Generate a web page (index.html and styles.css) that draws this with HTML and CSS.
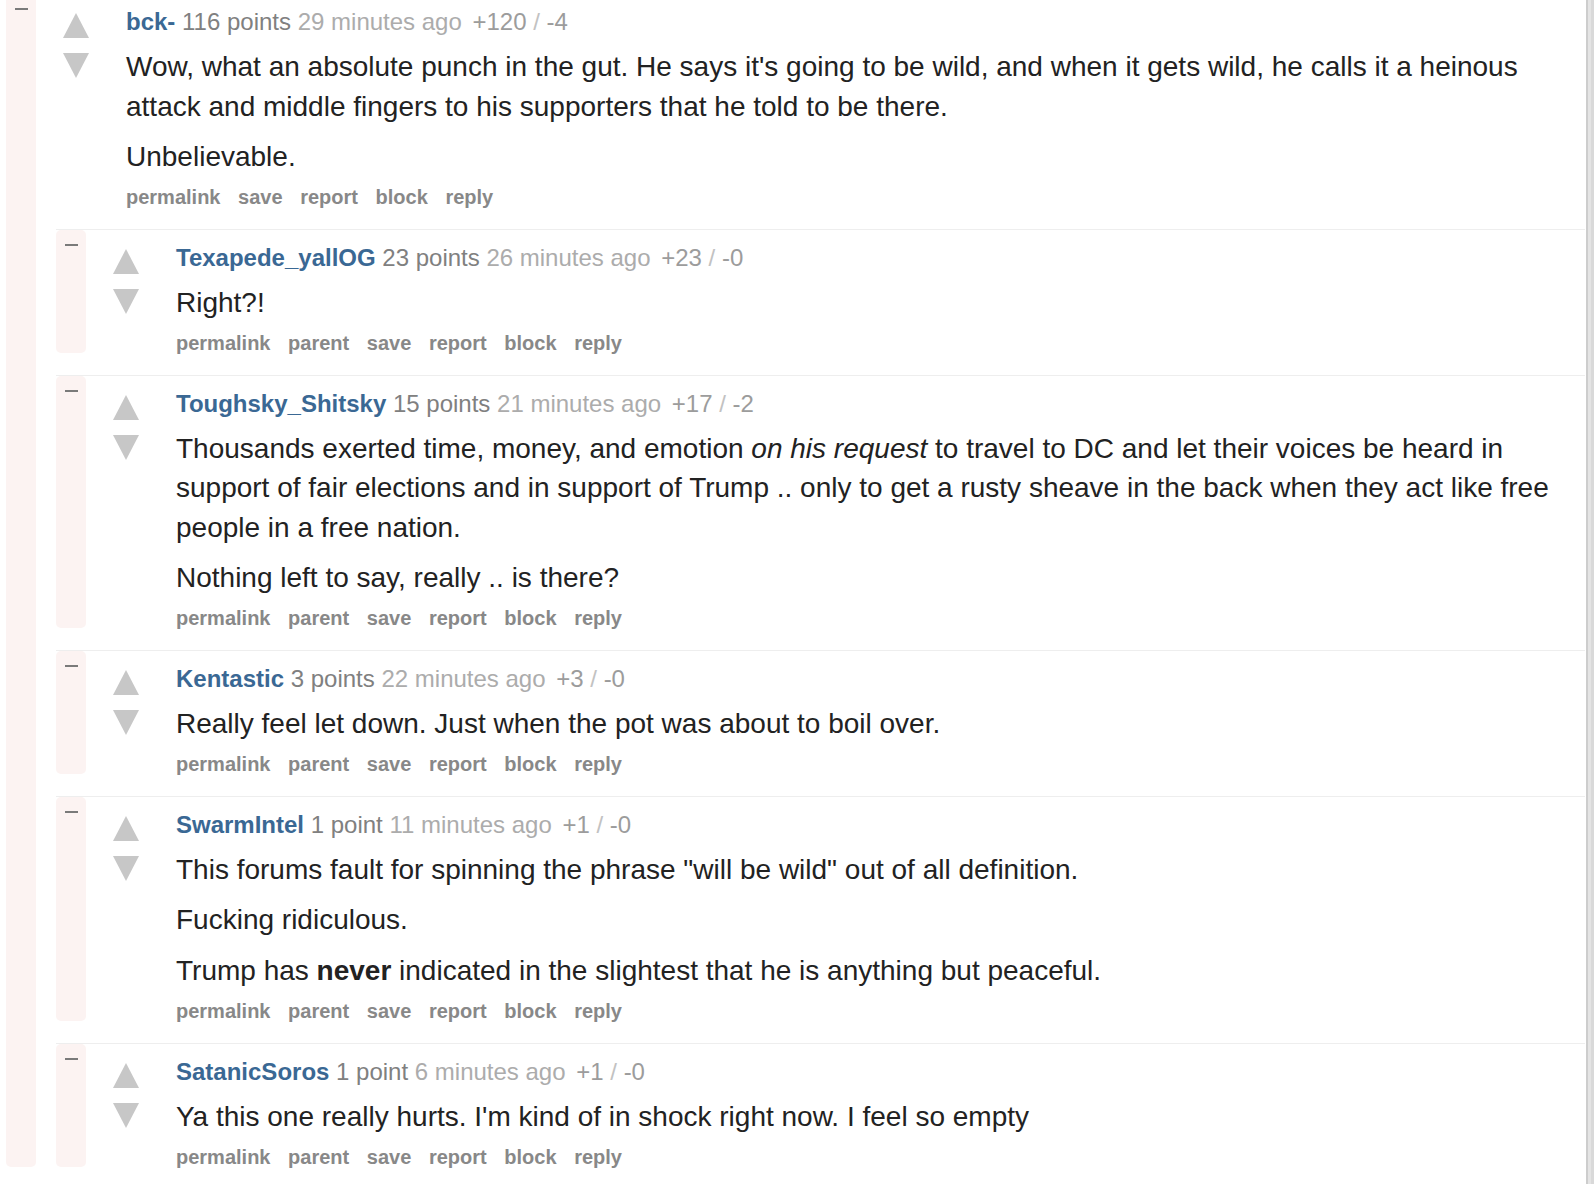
FILE: index.html
```html
<!DOCTYPE html>
<html>
<head>
<meta charset="utf-8">
<link rel="stylesheet" href="styles.css">
</head>
<body>
<div class="page">
  <div class="thread">
    <div class="comment outer">
      <div class="strip"><span class="minus"></span></div>
      <div class="main">
        <div class="entry">
          <div class="votes">
            <svg class="arrow" viewBox="0 0 26 25"><polygon points="13,0 26,25 0,25"/></svg>
            <svg class="arrow down" viewBox="0 0 26 25"><polygon points="0,0 26,0 13,25"/></svg>
          </div>
          <div class="body">
            <div class="tagline"><a class="author">bck-</a> <span class="score">116 points</span> <span class="time">29 minutes ago</span> <span class="tally"><span class="up">+120</span> <span class="sep">/</span> <span class="dn">-4</span></span></div>
            <div class="md">
              <p>Wow, what an absolute punch in the gut. He says it's going to be wild, and when it gets wild, he calls it a heinous attack and middle fingers to his supporters that he told to be there.</p>
              <p>Unbelievable.</p>
            </div>
            <ul class="actions"><li>permalink</li><li>save</li><li>report</li><li>block</li><li>reply</li></ul>
          </div>
        </div>
        <div class="children">
          <div class="comment">
            <div class="strip"><span class="minus"></span></div>
            <div class="main">
              <div class="entry">
                <div class="votes">
                  <svg class="arrow" viewBox="0 0 26 25"><polygon points="13,0 26,25 0,25"/></svg>
                  <svg class="arrow down" viewBox="0 0 26 25"><polygon points="0,0 26,0 13,25"/></svg>
                </div>
                <div class="body">
                  <div class="tagline"><a class="author">Texapede_yallOG</a> <span class="score">23 points</span> <span class="time">26 minutes ago</span> <span class="tally"><span class="up">+23</span> <span class="sep">/</span> <span class="dn">-0</span></span></div>
                  <div class="md"><p>Right?!</p></div>
                  <ul class="actions"><li>permalink</li><li>parent</li><li>save</li><li>report</li><li>block</li><li>reply</li></ul>
                </div>
              </div>
            </div>
          </div>
          <div class="comment">
            <div class="strip"><span class="minus"></span></div>
            <div class="main">
              <div class="entry">
                <div class="votes">
                  <svg class="arrow" viewBox="0 0 26 25"><polygon points="13,0 26,25 0,25"/></svg>
                  <svg class="arrow down" viewBox="0 0 26 25"><polygon points="0,0 26,0 13,25"/></svg>
                </div>
                <div class="body">
                  <div class="tagline"><a class="author">Toughsky_Shitsky</a> <span class="score">15 points</span> <span class="time">21 minutes ago</span> <span class="tally"><span class="up">+17</span> <span class="sep">/</span> <span class="dn">-2</span></span></div>
                  <div class="md">
                    <p>Thousands exerted time, money, and emotion <em>on his request</em> to travel to DC and let their voices be heard in support of fair elections and in support of Trump .. only to get a rusty sheave in the back when they act like free people in a free nation.</p>
                    <p>Nothing left to say, really .. is there?</p>
                  </div>
                  <ul class="actions"><li>permalink</li><li>parent</li><li>save</li><li>report</li><li>block</li><li>reply</li></ul>
                </div>
              </div>
            </div>
          </div>
          <div class="comment">
            <div class="strip"><span class="minus"></span></div>
            <div class="main">
              <div class="entry">
                <div class="votes">
                  <svg class="arrow" viewBox="0 0 26 25"><polygon points="13,0 26,25 0,25"/></svg>
                  <svg class="arrow down" viewBox="0 0 26 25"><polygon points="0,0 26,0 13,25"/></svg>
                </div>
                <div class="body">
                  <div class="tagline"><a class="author">Kentastic</a> <span class="score">3 points</span> <span class="time">22 minutes ago</span> <span class="tally"><span class="up">+3</span> <span class="sep">/</span> <span class="dn">-0</span></span></div>
                  <div class="md"><p>Really feel let down. Just when the pot was about to boil over.</p></div>
                  <ul class="actions"><li>permalink</li><li>parent</li><li>save</li><li>report</li><li>block</li><li>reply</li></ul>
                </div>
              </div>
            </div>
          </div>
          <div class="comment">
            <div class="strip"><span class="minus"></span></div>
            <div class="main">
              <div class="entry">
                <div class="votes">
                  <svg class="arrow" viewBox="0 0 26 25"><polygon points="13,0 26,25 0,25"/></svg>
                  <svg class="arrow down" viewBox="0 0 26 25"><polygon points="0,0 26,0 13,25"/></svg>
                </div>
                <div class="body">
                  <div class="tagline"><a class="author">SwarmIntel</a> <span class="score">1 point</span> <span class="time">11 minutes ago</span> <span class="tally"><span class="up">+1</span> <span class="sep">/</span> <span class="dn">-0</span></span></div>
                  <div class="md">
                    <p>This forums fault for spinning the phrase "will be wild" out of all definition.</p>
                    <p>Fucking ridiculous.</p>
                    <p>Trump has <strong>never</strong> indicated in the slightest that he is anything but peaceful.</p>
                  </div>
                  <ul class="actions"><li>permalink</li><li>parent</li><li>save</li><li>report</li><li>block</li><li>reply</li></ul>
                </div>
              </div>
            </div>
          </div>
          <div class="comment">
            <div class="strip"><span class="minus"></span></div>
            <div class="main">
              <div class="entry">
                <div class="votes">
                  <svg class="arrow" viewBox="0 0 26 25"><polygon points="13,0 26,25 0,25"/></svg>
                  <svg class="arrow down" viewBox="0 0 26 25"><polygon points="0,0 26,0 13,25"/></svg>
                </div>
                <div class="body">
                  <div class="tagline"><a class="author">SatanicSoros</a> <span class="score">1 point</span> <span class="time">6 minutes ago</span> <span class="tally"><span class="up">+1</span> <span class="sep">/</span> <span class="dn">-0</span></span></div>
                  <div class="md"><p>Ya this one really hurts. I'm kind of in shock right now. I feel so empty</p></div>
                  <ul class="actions"><li>permalink</li><li>parent</li><li>save</li><li>report</li><li>block</li><li>reply</li></ul>
                </div>
              </div>
            </div>
          </div>
        </div>
      </div>
    </div>
  </div>
  <div class="scrollbar"></div>
</div>
</body>
</html>
```

FILE: styles.css
```css
html, body {
  margin: 0;
  padding: 0;
  background: #fff;
}

body {
  font-family: "Liberation Sans", Arial, Helvetica, sans-serif;
  color: #222;
}

.page {
  display: flex;
  height: 1184px;
  overflow: hidden;
}

.thread {
  flex: 1;
  padding-left: 6px;
  margin-top: -6px;
}

.scrollbar {
  width: 8px;
  flex-shrink: 0;
  background: linear-gradient(to right, #cdcdcd 0, #cdcdcd 2px, #e4e4e4 2px, #e4e4e4 5px, #d9d9d9 5px, #d9d9d9 8px);
}

.comment {
  display: flex;
  align-items: stretch;
}

.children .comment {
  border-top: 1px solid #eeeeee;
  margin-bottom: 22px;
}

.children .comment:last-child {
  margin-bottom: 0;
}

.strip {
  width: 30px;
  flex-shrink: 0;
  background: #fcf3f2;
  border-radius: 5px;
  display: flex;
  justify-content: center;
  align-items: flex-start;
}

.minus {
  display: block;
  width: 13px;
  height: 2px;
  margin-top: 14px;
  background: #7a7a7a;
}

.main {
  flex: 1;
  min-width: 0;
}

.outer > .main > .entry {
  margin-bottom: 22px;
}

.children {
  margin-left: 20px;
  margin-right: 1px;
}

.entry {
  display: flex;
  align-items: flex-start;
}

.votes {
  width: 26px;
  flex-shrink: 0;
  margin-left: 27px;
  padding-top: 19px;
  display: flex;
  flex-direction: column;
  gap: 15px;
}

.arrow {
  display: block;
  width: 26px;
  height: 25px;
  fill: #c7c7c7;
}

.body {
  flex: 1;
  margin-left: 37px;
  padding-top: 12px;
  padding-right: 16px;
  min-width: 0;
}

.tagline {
  font-size: 24px;
  line-height: 32px;
  height: 32px;
  color: #808080;
  white-space: nowrap;
}

.author {
  color: #3a6894;
  font-weight: bold;
}

.time {
  color: #acacac;
}

.tally {
  margin-left: 4px;
}

.tally .up,
.tally .dn {
  color: #9c9c9c;
}

.tally .sep {
  color: #c2c2c2;
}

.md {
  margin-top: 9px;
  font-size: 28px;
  line-height: 39.6px;
  color: #222;
}

.md p {
  margin: 0 0 10.5px 0;
}

.md em {
  font-style: italic;
}

.md strong {
  font-weight: bold;
}

.actions {
  list-style: none;
  margin: 0;
  padding: 0;
  display: flex;
  gap: 17.6px;
  font-size: 20px;
  line-height: 20px;
  font-weight: bold;
  color: #888;
}
```
